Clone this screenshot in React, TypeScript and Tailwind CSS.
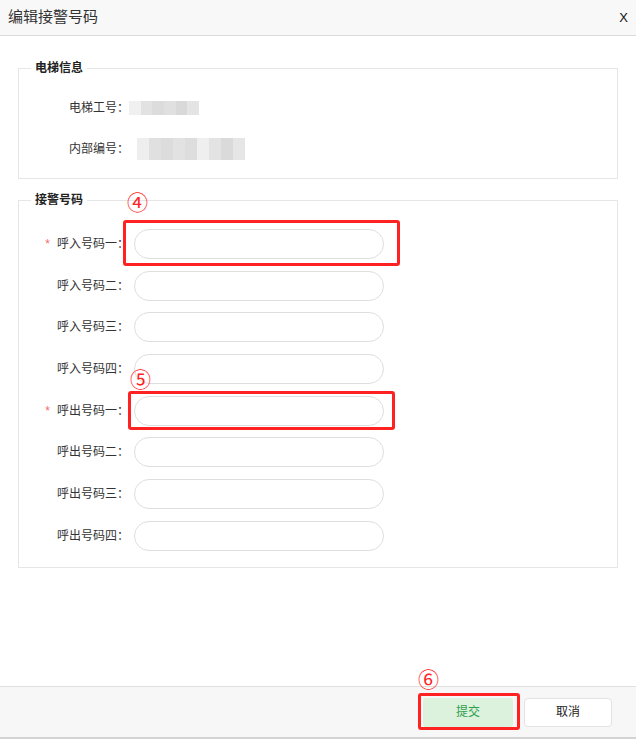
import type { ReactNode } from 'react'

const FONT = "font-['Liberation_Sans','Noto_Sans_CJK_SC',sans-serif]"

function Blur({ widths, h, shades }: { widths: number; h: number; shades: string[] }) {
  // mosaic block standing in for a masked value
  return (
    <div className="flex blur-[0.6px]" style={{ height: h }}>
      {shades.map((c, i) => (
        <div key={i} style={{ width: widths / shades.length, background: c }} />
      ))}
    </div>
  )
}

function InfoRow({ label, children }: { label: string; children: ReactNode }) {
  return (
    <div className="flex items-center h-[30px]">
      <div className="w-[110px] text-right text-[12px] leading-[16px] text-[#333]">{label}</div>
      {children}
    </div>
  )
}

function PhoneRow({ label, required }: { label: string; required?: boolean }) {
  return (
    <div className="flex items-center h-[30px]">
      <div className="w-[110px] text-right text-[12px] leading-[16px] text-[#333]">
        {required && <span className="text-[#f56c6c] mr-[7px]">*</span>}
        {label}
      </div>
      <input className="ml-[5px] w-[250px] h-[30px] rounded-full border border-[#dedede] bg-white outline-none" />
    </div>
  )
}

function Mark({ num, cls, numCls }: { num: string; cls: string; numCls: string }) {
  return (
    <>
      <div className={`absolute border-[3px] border-[#ff2222] rounded-[3px] pointer-events-none ${cls}`} />
      <div className={`absolute text-[21px] leading-none text-[#ff2222] ${numCls}`}>{num}</div>
    </>
  )
}

export default function App() {
  return (
    <div className={`relative w-[636px] h-[739px] flex flex-col bg-white overflow-hidden ${FONT}`}>
      <div className="h-[36px] shrink-0 flex items-center justify-between pl-[8px] pr-[8px] bg-[#f8f8f8] border-b border-[#dcdcdc]">
        <span className="text-[15px] text-[#333]">编辑接警号码</span>
        <span className="text-[13px] text-[#111]">X</span>
      </div>

      <div className="flex-1 px-[18px] pt-[24px]">
        <fieldset className="border border-[#e6e6e6] pb-[14px]">
          <legend className="ml-[12px] px-[4px] text-[12px] leading-[16px] font-bold text-[#222]">电梯信息</legend>
          <div className="flex flex-col gap-[11px] pt-[17px]">
            <InfoRow label="电梯工号：">
              <Blur widths={70} h={14} shades={['#f0f0f0', '#e2e2e2', '#dcdcdc', '#e0e0e0', '#d9d9d9', '#e4e4e4']} />
            </InfoRow>
            <InfoRow label="内部编号：">
              <div className="ml-[8px]">
                <Blur widths={108} h={22} shades={['#eeeeee', '#e0e0e0', '#dcdcdc', '#e2e2e2', '#dddddd', '#efefef', '#e3e3e3', '#dadada', '#e6e6e6']} />
              </div>
            </InfoRow>
          </div>
        </fieldset>

        <fieldset className="mt-[13px] border border-[#e6e6e6] pb-[16px]">
          <legend className="ml-[12px] px-[4px] text-[12px] leading-[16px] font-bold text-[#222]">接警号码</legend>
          <div className="flex flex-col gap-[11.7px] pt-[21px]">
            <PhoneRow label="呼入号码一：" required />
            <PhoneRow label="呼入号码二：" />
            <PhoneRow label="呼入号码三：" />
            <PhoneRow label="呼入号码四：" />
            <PhoneRow label="呼出号码一：" required />
            <PhoneRow label="呼出号码二：" />
            <PhoneRow label="呼出号码三：" />
            <PhoneRow label="呼出号码四：" />
          </div>
        </fieldset>
      </div>

      <div className="h-[53px] shrink-0 flex items-center justify-end gap-[11px] pr-[24px] bg-[#f7f7f7] border-t border-[#e0e0e0] border-b-2 border-b-[#d4d4d4]">
        <button className="w-[90px] h-[29px] rounded-[3px] bg-[#dcf2dc] text-[12px] text-[#2f9e4f]">提交</button>
        <button className="w-[88px] h-[29px] rounded-[4px] bg-white border border-[#e3e3e3] text-[12px] text-[#222]">取消</button>
      </div>

      <Mark num="④" cls="left-[123px] top-[220px] w-[277px] h-[46px]" numCls="left-[127px] top-[192px]" />
      <Mark num="⑤" cls="left-[128px] top-[391px] w-[267px] h-[39px]" numCls="left-[130px] top-[369px]" />
      <Mark num="⑥" cls="left-[418px] top-[693px] w-[102px] h-[37px]" numCls="left-[418px] top-[669px]" />
    </div>
  )
}
